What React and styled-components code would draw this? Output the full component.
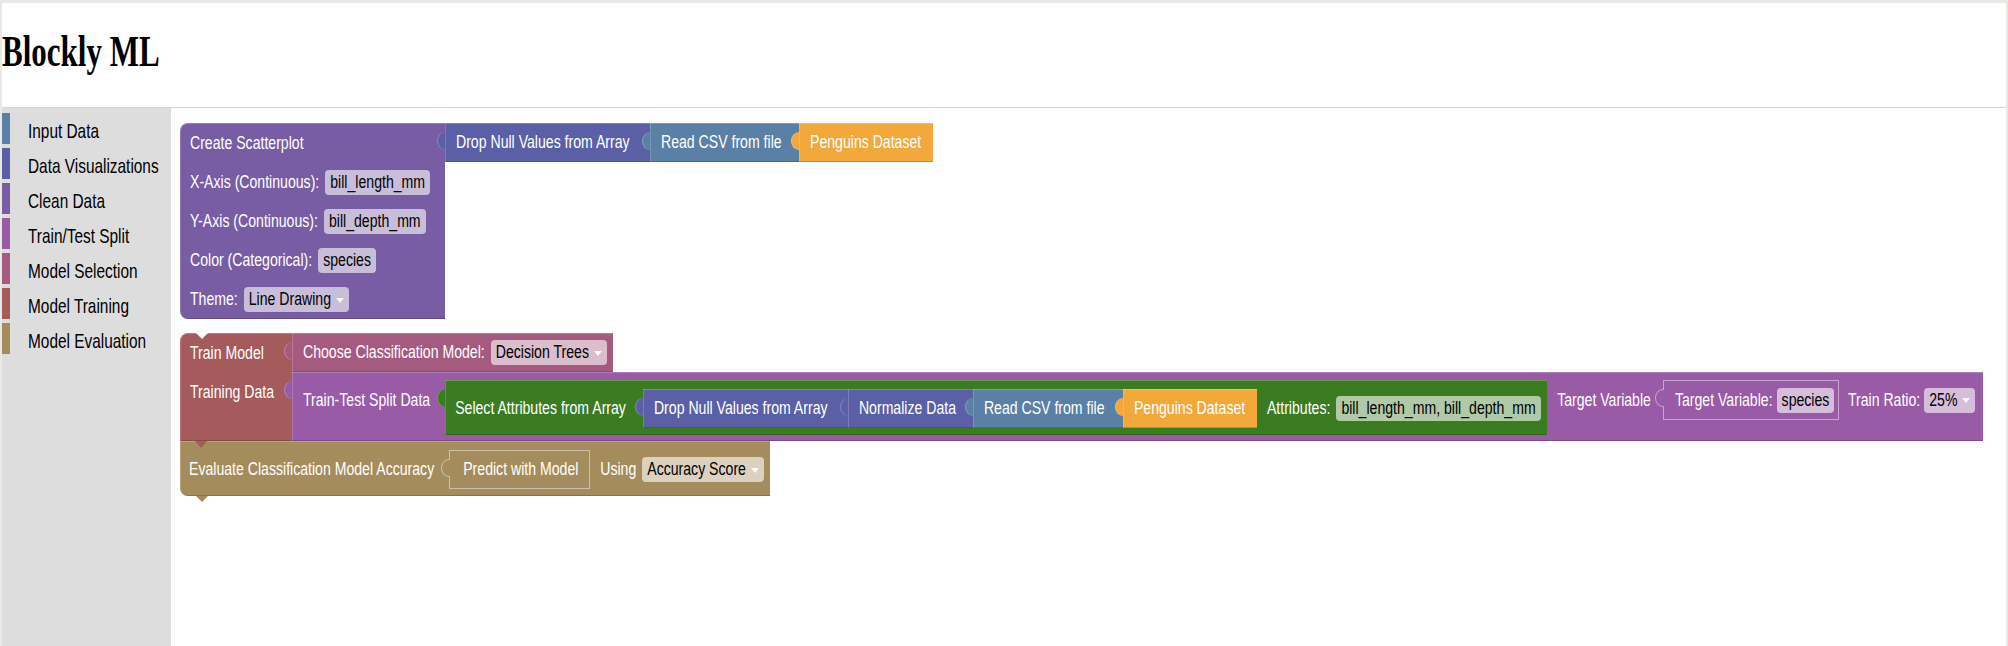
import styled, { createGlobalStyle } from "styled-components";

const GlobalStyle = createGlobalStyle`
  html, body {
    margin: 0;
    padding: 0;
    height: 100%;
  }
  body {
    background: #e9e8e4;
    font-family: "Liberation Sans", Arial, sans-serif;
    overflow: hidden;
  }
  #root {
    height: 100%;
  }
`;

const C = {
  scatter: "#785ca4",
  clean: "#5b5fa5",
  input: "#5b80a5",
  penguin: "#f2a83b",
  train: "#a55b5b",
  select: "#a55b80",
  split: "#995ba5",
  green: "#3b7c23",
  evaluate: "#a58c5d",
};

const categories = [
  { name: "Input Data", color: C.input },
  { name: "Data Visualizations", color: C.clean },
  { name: "Clean Data", color: C.scatter },
  { name: "Train/Test Split", color: C.split },
  { name: "Model Selection", color: C.select },
  { name: "Model Training", color: C.train },
  { name: "Model Evaluation", color: C.evaluate },
];

function Pill({ children, dropdown, ml }) {
  return (
    <Field $ml={ml}>
      <Label $dark>{children}</Label>
      {dropdown && <Arrow />}
    </Field>
  );
}

export default function App() {
  return (
    <>
      <GlobalStyle />
      <Page>
        <Header>
          <Title>Blockly ML</Title>
        </Header>
        <Main>
          <Toolbox>
            {categories.map((c) => (
              <Category key={c.name} $color={c.color}>
                <CatLabel>{c.name}</CatLabel>
              </Category>
            ))}
          </Toolbox>

          <Workspace>
            {/* scatterplot stack */}
            <BlockRow>
              <ScatterBody>
                <FieldRow>
                  <Label>Create Scatterplot</Label>
                </FieldRow>
                <FieldRow>
                  <Label>X-Axis (Continuous):</Label>
                  <Pill ml={6}>bill_length_mm</Pill>
                </FieldRow>
                <FieldRow>
                  <Label>Y-Axis (Continuous):</Label>
                  <Pill ml={6}>bill_depth_mm</Pill>
                </FieldRow>
                <FieldRow>
                  <Label>Color (Categorical):</Label>
                  <Pill ml={6}>species</Pill>
                </FieldRow>
                <FieldRow>
                  <Label>Theme:</Label>
                  <Pill dropdown ml={6}>
                    Line Drawing
                  </Pill>
                </FieldRow>
              </ScatterBody>
              <Value $bg={C.clean} $w={205} $h={38.5}>
                <Label>Drop Null Values from Array</Label>
              </Value>
              <Value $bg={C.input} $w={149} $h={38.5}>
                <Label>Read CSV from file</Label>
              </Value>
              <Value $bg={C.penguin} $w={134} $h={38.5}>
                <Label>Penguins Dataset</Label>
              </Value>
            </BlockRow>

            {/* training stack */}
            <Stack>
              <BlockRow>
                <TrainHead>
                  <HeadRow>
                    <Label>Train Model</Label>
                  </HeadRow>
                  <HeadRow>
                    <Label>Training Data</Label>
                  </HeadRow>
                </TrainHead>
                <Inputs>
                  <Value $bg={C.select} $w={321} $h={39}>
                    <Label>Choose Classification Model:</Label>
                    <Pill dropdown ml={6}>
                      Decision Trees
                    </Pill>
                  </Value>
                  <Value $bg={C.split} $w={1691} $h={69} $align="flex-start" $pt={8}>
                    <Line>
                      <Label>Train-Test Split Data</Label>
                    </Line>
                    <Value $bg={C.green} $w={1102} $h={55} $ml={15} $pl={10} $pt={9} $pb={7}>
                      <Label>Select Attributes from Array</Label>
                      <Value $bg={C.clean} $w={205} $h={39} $ml={17}>
                        <Label>Drop Null Values from Array</Label>
                      </Value>
                      <Value $bg={C.clean} $w={125} $h={39}>
                        <Label>Normalize Data</Label>
                      </Value>
                      <Value $bg={C.input} $w={150} $h={39}>
                        <Label>Read CSV from file</Label>
                      </Value>
                      <Value $bg={C.penguin} $w={134} $h={39}>
                        <Label>Penguins Dataset</Label>
                      </Value>
                      <Label $ml={10}>Attributes:</Label>
                      <Pill ml={6}>bill_length_mm, bill_depth_mm</Pill>
                    </Value>
                    <Line $ml={10}>
                      <Label>Target Variable</Label>
                    </Line>
                    <Outline $bg={C.split} $w={176} $h={40} $ml={12}>
                      <Label>Target Variable:</Label>
                      <Pill ml={4}>species</Pill>
                    </Outline>
                    <Line $ml={9}>
                      <Label>Train Ratio:</Label>
                      <Pill dropdown ml={4}>
                        25%
                      </Pill>
                    </Line>
                  </Value>
                </Inputs>
              </BlockRow>

              <Evaluate>
                <Label>Evaluate Classification Model Accuracy</Label>
                <Outline $bg={C.evaluate} $w={141} $h={39} $ml={15} $pl={13}>
                  <Label>Predict with Model</Label>
                </Outline>
                <Label $ml={10}>Using</Label>
                <Pill dropdown ml={6}>
                  Accuracy Score
                </Pill>
              </Evaluate>
            </Stack>
          </Workspace>
        </Main>
      </Page>
    </>
  );
}

// styles

const Page = styled.div`
  box-sizing: border-box;
  height: calc(100% - 3px);
  margin: 3px 2px 0;
  background: #fff;
  display: flex;
  flex-direction: column;
`;

const Header = styled.header`
  box-sizing: border-box;
  height: 105px;
  flex: none;
  padding-bottom: 8px;
  border-bottom: 1px solid #d4d4d4;
  display: flex;
  align-items: center;
`;

const Title = styled.h1`
  margin: 0;
  font-family: "Liberation Serif", "Times New Roman", serif;
  font-weight: bold;
  font-size: 31px;
  line-height: 36px;
  color: #000;
  transform: scaleY(1.45);
`;

const Main = styled.div`
  flex: 1;
  min-height: 0;
  display: flex;
`;

const Toolbox = styled.nav`
  box-sizing: border-box;
  width: 169px;
  flex: none;
  background: #dddddd;
  padding-top: 5px;
  display: flex;
  flex-direction: column;
  gap: 4px;
`;

const Category = styled.div`
  box-sizing: border-box;
  height: 31px;
  border-left: 8px solid ${(p) => p.$color};
  padding-left: 18px;
  display: flex;
  align-items: center;
`;

const CatLabel = styled.span`
  display: inline-block;
  margin-top: 7px;
  font-size: 15.4px;
  color: #000;
  white-space: nowrap;
  transform: scaleY(1.27);
`;

const Workspace = styled.main`
  flex: 1;
  min-width: 0;
  overflow: hidden;
  padding: 15px 0 0 9px;
  display: flex;
  flex-direction: column;
  align-items: flex-start;
  gap: 14px;
`;

const BlockRow = styled.div`
  display: flex;
  align-items: flex-start;
`;

const Stack = styled.div`
  display: flex;
  flex-direction: column;
  align-items: flex-start;
`;

const Label = styled.span`
  display: inline-block;
  flex: none;
  margin-left: ${(p) => p.$ml || 0}px;
  font-size: 14.1px;
  line-height: 17px;
  color: ${(p) => (p.$dark ? "#000" : "#fff")};
  white-space: nowrap;
  transform: scaleY(1.3);
`;

const Field = styled.span`
  box-sizing: border-box;
  flex: none;
  display: inline-flex;
  align-items: center;
  height: 25px;
  padding: 0 5px;
  margin-left: ${(p) => p.$ml || 0}px;
  border-radius: 4px;
  background: rgba(255, 255, 255, 0.6);
`;

const Arrow = styled.span`
  width: 0;
  height: 0;
  margin: 1px 0 0 5px;
  border-left: 4px solid transparent;
  border-right: 4px solid transparent;
  border-top: 5px solid rgba(255, 255, 255, 0.9);
`;

const blockEdges = `
  box-shadow: inset 0 1px 0 rgba(255, 255, 255, 0.22),
    inset 1px 0 0 rgba(255, 255, 255, 0.18),
    inset 0 -1px 0 rgba(0, 0, 0, 0.18);
`;

const ScatterBody = styled.div`
  box-sizing: border-box;
  width: 265px;
  height: 196px;
  padding-top: 1px;
  background: ${C.scatter};
  border-radius: 8px 0 0 8px;
  ${blockEdges}
`;

const FieldRow = styled.div`
  height: 39px;
  padding-left: 10px;
  display: flex;
  align-items: center;
`;

const Value = styled.div`
  position: relative;
  box-sizing: border-box;
  flex: none;
  display: flex;
  align-items: ${(p) => p.$align || "center"};
  width: ${(p) => p.$w}px;
  height: ${(p) => p.$h}px;
  padding: ${(p) => p.$pt || 0}px 0 ${(p) => p.$pb || 0}px ${(p) => p.$pl ?? 11}px;
  margin-left: ${(p) => p.$ml || 0}px;
  background: ${(p) => p.$bg};
  ${blockEdges}

  &::before {
    content: "";
    position: absolute;
    left: -8px;
    top: 9px;
    width: 8px;
    height: 18px;
    background: ${(p) => p.$bg};
    border-radius: 8px 0 0 8px / 9px 0 0 9px;
    box-shadow: inset 1px 0 0 rgba(255, 255, 255, 0.25);
  }
`;

const Outline = styled.div`
  position: relative;
  box-sizing: border-box;
  flex: none;
  display: flex;
  align-items: center;
  width: ${(p) => p.$w}px;
  height: ${(p) => p.$h}px;
  padding-left: ${(p) => p.$pl ?? 11}px;
  margin-left: ${(p) => p.$ml || 0}px;
  border: 1px solid rgba(255, 255, 255, 0.45);

  &::before {
    content: "";
    position: absolute;
    box-sizing: border-box;
    left: -9px;
    top: 8px;
    width: 9px;
    height: 18px;
    background: ${(p) => p.$bg};
    border: 1px solid rgba(255, 255, 255, 0.45);
    border-right: none;
    border-radius: 8px 0 0 8px / 9px 0 0 9px;
  }
`;

const Line = styled.div`
  flex: none;
  height: 40px;
  margin-left: ${(p) => p.$ml || 0}px;
  display: flex;
  align-items: center;
`;

const TrainHead = styled.div`
  position: relative;
  box-sizing: border-box;
  width: 112px;
  align-self: stretch;
  background: ${C.train};
  border-radius: 8px 0 0 0;
  ${blockEdges}

  &::before {
    content: "";
    position: absolute;
    left: 16px;
    top: 0;
    border-left: 6px solid transparent;
    border-right: 6px solid transparent;
    border-top: 6px solid #fff;
  }

  &::after {
    content: "";
    position: absolute;
    z-index: 3;
    left: 15px;
    top: 100%;
    border-left: 6px solid transparent;
    border-right: 6px solid transparent;
    border-top: 7px solid ${C.train};
  }
`;

const HeadRow = styled.div`
  box-sizing: border-box;
  height: 39px;
  padding: 2px 0 0 10px;
  display: flex;
  align-items: center;
`;

const Inputs = styled.div`
  display: flex;
  flex-direction: column;
  align-items: flex-start;
`;

const Evaluate = styled.div`
  position: relative;
  box-sizing: border-box;
  width: 590px;
  height: 55px;
  padding: 9px 0 7px 9px;
  display: flex;
  align-items: center;
  background: ${C.evaluate};
  border-radius: 0 0 0 8px;
  ${blockEdges}

  &::after {
    content: "";
    position: absolute;
    left: 16px;
    top: 100%;
    border-left: 6px solid transparent;
    border-right: 6px solid transparent;
    border-top: 6px solid ${C.evaluate};
  }
`;
